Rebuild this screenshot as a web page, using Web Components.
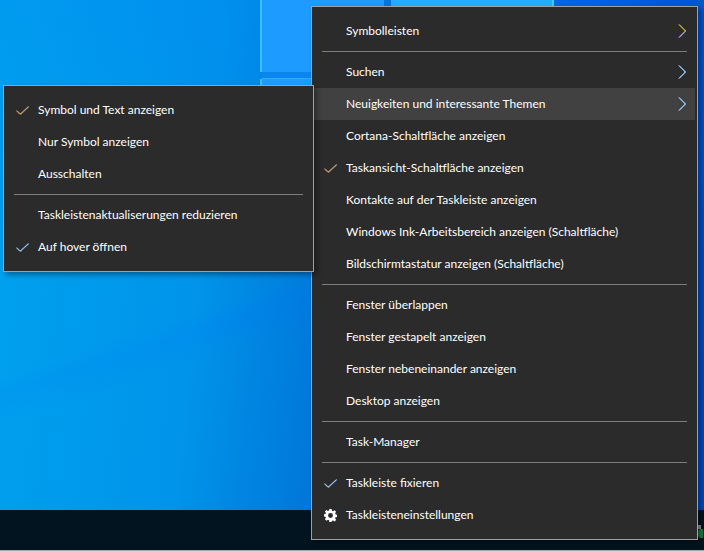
<!DOCTYPE html>
<html>
<head>
<meta charset="utf-8">
<title>Taskleiste</title>
<style>
  html, body { margin: 0; height: 100%; overflow: hidden; }
  body { font-family: "Lato", "Open Sans", "Liberation Sans", sans-serif; }
</style>
</head>
<body>
<desktop-view>
  <context-menu slot="main" style="--menu-x: 311px; --menu-y: 6px; --menu-w: 387px;">
    <menu-item arrow tone="warm">Symbolleisten</menu-item>
    <menu-sep></menu-sep>
    <menu-item arrow>Suchen</menu-item>
    <menu-item arrow hot>Neuigkeiten und interessante Themen</menu-item>
    <menu-item>Cortana-Schaltfläche anzeigen</menu-item>
    <menu-item check tone="warm">Taskansicht-Schaltfläche anzeigen</menu-item>
    <menu-item>Kontakte auf der Taskleiste anzeigen</menu-item>
    <menu-item>Windows Ink-Arbeitsbereich anzeigen (Schaltfläche)</menu-item>
    <menu-item>Bildschirmtastatur anzeigen (Schaltfläche)</menu-item>
    <menu-sep></menu-sep>
    <menu-item>Fenster überlappen</menu-item>
    <menu-item>Fenster gestapelt anzeigen</menu-item>
    <menu-item>Fenster nebeneinander anzeigen</menu-item>
    <menu-item>Desktop anzeigen</menu-item>
    <menu-sep></menu-sep>
    <menu-item>Task-Manager</menu-item>
    <menu-sep></menu-sep>
    <menu-item check>Taskleiste fixieren</menu-item>
    <menu-item gear>Taskleisteneinstellungen</menu-item>
  </context-menu>
  <context-menu slot="main" style="--menu-x: 3px; --menu-y: 85px; --menu-w: 311px;">
    <menu-item check tone="warm">Symbol und Text anzeigen</menu-item>
    <menu-item>Nur Symbol anzeigen</menu-item>
    <menu-item>Ausschalten</menu-item>
    <menu-sep></menu-sep>
    <menu-item>Taskleistenaktualiserungen reduzieren</menu-item>
    <menu-item check>Auf hover öffnen</menu-item>
  </context-menu>
</desktop-view>

<script>
class DesktopView extends HTMLElement {
  connectedCallback() {
    this.attachShadow({ mode: 'open' });
    this.shadowRoot.innerHTML = `
      <style>
        :host { display: flex; flex-direction: column; width: 704px; height: 551px; position: relative; overflow: hidden; }
        .wall {
          flex: 1; position: relative; overflow: hidden;
          background:
            linear-gradient(162deg, transparent 51%, rgba(0, 110, 255, .12) 53.5%, transparent 58%),
            linear-gradient(180deg, rgba(0, 115, 255, .15) 0%, transparent 50%),
            linear-gradient(96deg, #00a2ee 0%, #0094ea 30%, #0078da 47%, #0070d8 60%, #0060e0 78%, #0048c0 100%);
        }
        .pane { position: absolute; background: #1e9bff; }
        .p1 { left: 262px; top: 0; width: 122px; height: 72px; box-shadow: -2px 0 0 #35c3f5; }
        .p2 { left: 391px; top: 0; width: 161px; height: 72px; background: #22aeff; box-shadow: 2px 0 0 #35d0f5; }
        .p3 { left: 262px; top: 79px; width: 122px; height: 100px; box-shadow: -2px 0 0 #35c3f5, 0 -1px 0 #30b0f8; }
        .gap { position: absolute; left: 262px; top: 72px; width: 290px; height: 7px; background: #0a86ee; }
        .bar { height: 40px; background: #01141f; position: relative; }
        .edge { height: 1px; background: #a8a8a8; }
        .tray { position: absolute; left: 698px; top: 19px; width: 5px; height: 9px; border-radius: 50% 0 0 50%; background: #1a7d42; }
        .tray::before { content: ""; position: absolute; left: 0; top: -4px; width: 3px; height: 4px; background: #8a9296; }
      </style>
      <div class="wall">
        <div class="gap"></div>
        <div class="pane p1"></div>
        <div class="pane p2"></div>
        <div class="pane p3"></div>
      </div>
      <div class="bar"><div class="tray"></div></div>
      <div class="edge"></div>
      <slot name="main"></slot>
    `;
  }
}

class ContextMenu extends HTMLElement {
  connectedCallback() {
    this.attachShadow({ mode: 'open' });
    this.shadowRoot.innerHTML = `
      <style>
        :host {
          display: flex; flex-direction: column;
          position: absolute; left: var(--menu-x); top: var(--menu-y); width: var(--menu-w);
          box-sizing: border-box; padding: 8px 2px;
          background: #2b2b2b; border: 1px solid #a0a0a0;
          box-shadow: 3px 3px 5px rgba(0, 0, 0, .35);
          color: #fff;
        }
      </style>
      <slot></slot>
    `;
  }
}

class MenuItem extends HTMLElement {
  connectedCallback() {
    this.attachShadow({ mode: 'open' });
    const warm = this.getAttribute('tone') === 'warm';
    // two offset strokes stand in for the fringe of the LCD text rendering
    const fringe = (d) => `
      <path d="${d}" stroke="${warm ? '#6aa8e6' : '#4f9ff0'}" stroke-width=".9" transform="translate(.55 0)"/>
      <path d="${d}" stroke="${warm ? '#f7a944' : '#c2dcf6'}" stroke-width="1" transform="translate(-.25 0)"/>`;
    let icon = '';
    if (this.hasAttribute('check')) {
      icon = `<svg width="13" height="9" viewBox="0 0 13 9" fill="none">${fringe('M.5 4.6 L4.2 8.3 L12.7 .5')}</svg>`;
    }
    if (this.hasAttribute('gear')) {
      icon = `<svg width="13" height="13" viewBox="0 0 24 24">
        <path fill="#fff" fill-rule="evenodd" d="M10 0h4l.7 3.3 2 .8 2.8-1.8 2.8 2.8-1.8 2.8.8 2 3.3.7v4l-3.3.7-.8 2 1.8 2.8-2.8 2.8-2.8-1.8-2 .8L14 24h-4l-.7-3.3-2-.8-2.8 1.8-2.8-2.8 1.8-2.8-.8-2L-.6 14v-4l3.3-.7.8-2-1.8-2.8 2.8-2.8 2.8 1.8 2-.8zM12 7.5a4.5 4.5 0 1 0 0 9 4.5 4.5 0 0 0 0-9z"/>
      </svg>`;
    }
    const arrow = this.hasAttribute('arrow')
      ? `<svg class="arrow" width="9" height="14" viewBox="0 0 9 14" fill="none">${fringe('M1 .5 L7.5 7 L1 13.5')}</svg>`
      : '';
    this.shadowRoot.innerHTML = `
      <style>
        :host { display: block; height: 32px; }
        :host([hot]) .row { background: #414141; }
        .row { height: 32px; display: flex; align-items: center; }
        .mark { width: 32px; flex: none; display: flex; justify-content: center; align-items: center; }
        .label { flex: 1; font-size: 12px; line-height: 16px; white-space: nowrap; }
        .arrow { margin-right: 8px; }
      </style>
      <div class="row">
        <span class="mark">${icon}</span>
        <span class="label"><slot></slot></span>
        ${arrow}
      </div>
    `;
  }
}

class MenuSep extends HTMLElement {
  connectedCallback() {
    this.attachShadow({ mode: 'open' });
    this.shadowRoot.innerHTML = `
      <style>
        :host { display: block; height: 1px; margin: 4px 8px; background: #7e7e7e; }
      </style>
    `;
  }
}

customElements.define('desktop-view', DesktopView);
customElements.define('context-menu', ContextMenu);
customElements.define('menu-item', MenuItem);
customElements.define('menu-sep', MenuSep);
</script>
</body>
</html>
